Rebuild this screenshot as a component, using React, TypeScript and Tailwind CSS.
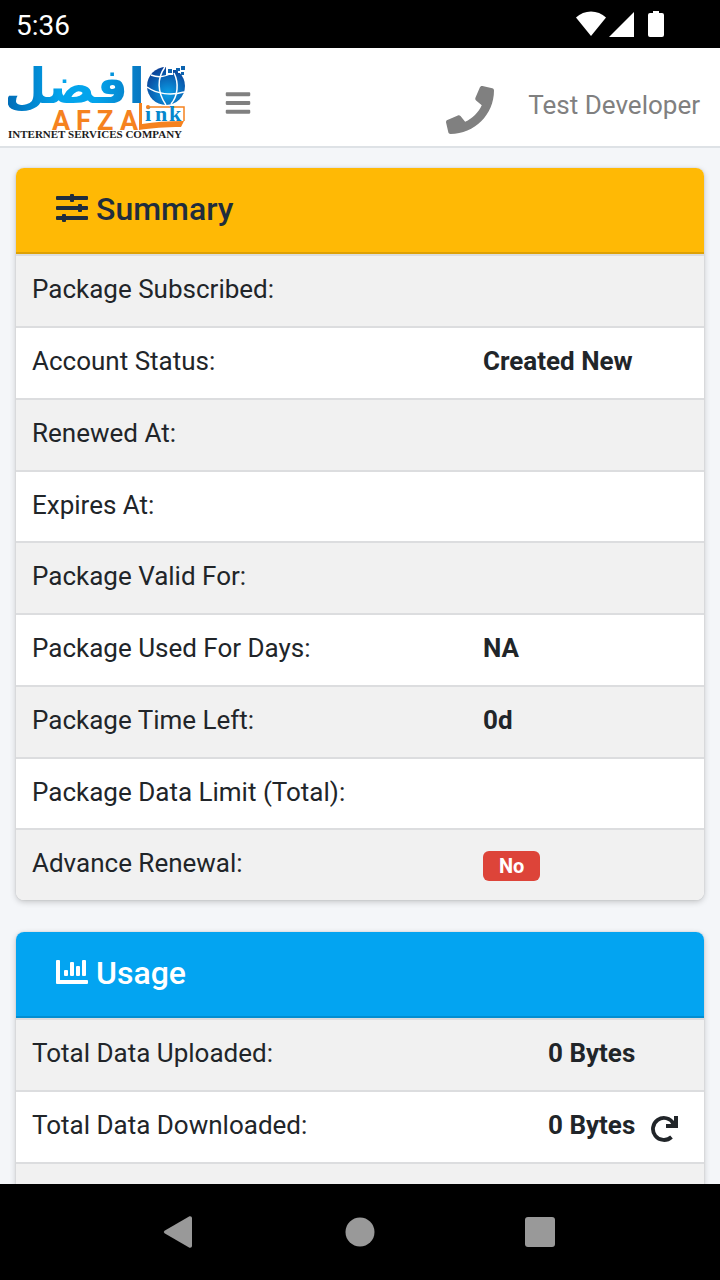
import React from 'react';
import { FaBars, FaPhone } from 'react-icons/fa';

type Row = { label: string; value?: React.ReactNode };

const summaryRows: Row[] = [
  { label: 'Package Subscribed:' },
  { label: 'Account Status:', value: 'Created New' },
  { label: 'Renewed At:' },
  { label: 'Expires At:' },
  { label: 'Package Valid For:' },
  { label: 'Package Used For Days:', value: 'NA' },
  { label: 'Package Time Left:', value: '0d' },
  { label: 'Package Data Limit (Total):' },
  { label: 'Advance Renewal:', value: <Badge>No</Badge> },
];

const usageRows: Row[] = [
  { label: 'Total Data Uploaded:', value: '0 Bytes' },
  {
    label: 'Total Data Downloaded:',
    value: (
      <span className="flex items-center gap-4">
        0 Bytes
        <button type="button" aria-label="Refresh" className="pt-2">
          <RefreshIcon />
        </button>
      </span>
    ),
  },
  { label: '' },
];

function Badge({ children }: { children: React.ReactNode }) {
  return (
    <span className="mt-1.5 block w-fit rounded-md bg-[#dd4439] px-4 text-xl leading-[30px] text-white">
      {children}
    </span>
  );
}

function RefreshIcon() {
  return (
    <svg width="28" height="28" viewBox="0 0 28 28" fill="none">
      <path d="M22.500 8.500A11 11 0 1 0 20.500 22" stroke="#212529" strokeWidth="3.800" />
      <path d="M23 1h4v12H15V9h4.500L23 6z" fill="#212529" />
    </svg>
  );
}

function SlidersIcon() {
  return (
    <svg width="32" height="28" viewBox="0 0 32 28" fill="currentColor">
      <rect y="2" width="32" height="4" rx="1" />
      <rect y="12" width="32" height="4" rx="1" />
      <rect y="22" width="32" height="4" rx="1" />
      <rect x="14" width="4" height="8" rx="1" />
      <rect x="22" y="10" width="4" height="8" rx="1" />
      <rect x="6" y="20" width="4" height="8" rx="1" />
    </svg>
  );
}

function ChartIcon() {
  return (
    <svg width="32" height="24" viewBox="0 0 32 24" fill="currentColor">
      <path d="M1 0h2a1 1 0 0 1 1 1v19h27a1 1 0 0 1 1 1v2a1 1 0 0 1-1 1H1a1 1 0 0 1-1-1V1a1 1 0 0 1 1-1z" />
      <rect x="8" y="10" width="4" height="6" rx="1" />
      <rect x="14" y="2" width="4" height="14" rx="1" />
      <rect x="20" y="6" width="4" height="10" rx="1" />
      <rect x="26" width="4" height="16" rx="1" />
    </svg>
  );
}

function Logo() {
  return (
    <svg width="180" height="84" viewBox="0 0 180 84" role="img" aria-label="Afzal Link">
      <defs>
        <linearGradient id="word" x1="0" y1="0" x2="1" y2="0">
          <stop offset="0" stopColor="#0069b4" />
          <stop offset="0.4" stopColor="#03a4ec" />
          <stop offset="0.65" stopColor="#03a4ec" />
          <stop offset="1" stopColor="#0873bd" />
        </linearGradient>
        <radialGradient id="globe" cx="0.55" cy="0.7" r="0.7">
          <stop offset="0" stopColor="#0aa0e8" />
          <stop offset="1" stopColor="#0a3f96" />
        </radialGradient>
      </defs>

      <text
        x="137"
        y="46"
        direction="rtl"
        fill="url(#word)"
        fontFamily="'DejaVu Sans', sans-serif"
        fontWeight="700"
        fontSize="49"
      >
        افضل
      </text>

      <circle cx="158" cy="29" r="19" fill="url(#globe)" />
      <g fill="none" stroke="#fff" strokeWidth="1.500">
        <path d="M139 30c10 7 24 9 37 5" />
        <path d="M143 18c8 3 14 2 20-2" />
        <path d="M157 10c-8 11-8 25 1 38" />
        <path d="M166 16c5 10 4 23-3 31" />
      </g>
      <g fill="#fff">
        <rect x="158" y="8" width="7" height="10" />
        <rect x="165" y="8" width="13" height="5" />
        <rect x="170" y="12" width="8" height="4" />
      </g>
      <g fill="#0b62ae">
        <rect x="160" y="12" width="4" height="4" />
        <rect x="168" y="11" width="4" height="3" />
        <rect x="173" y="9" width="4" height="4" />
        <rect x="173" y="15" width="3" height="3" />
      </g>

      <path d="M131 46h3v21c12-2 26-3 42-3l-3 6c-16 0-29 1-42 3z" fill="#f5821f" />
      <path d="M142 50h34v14" fill="none" stroke="#f5821f" strokeWidth="1.500" />

      <text
        x="44 68 89 112"
        y="73"
        fill="#f5821f"
        fontFamily="'Liberation Sans Narrow', Roboto, sans-serif"
        fontWeight="700"
        fontSize="27"
      >
        AFZA
      </text>
      <text
        x="137 147 161"
        y="64"
        fill="#0687cd"
        fontFamily="'Liberation Serif', serif"
        fontWeight="700"
        fontSize="22"
      >
        ink
      </text>
      <circle cx="140" cy="50" r="2" fill="#f5821f" />
      <text
        x="0"
        y="81"
        fill="#1c1c1c"
        fontFamily="'Liberation Serif', serif"
        fontWeight="700"
        fontSize="11"
      >
        INTERNET SERVICES COMPANY
      </text>
    </svg>
  );
}

function StatusBar() {
  return (
    <div className="flex h-12 shrink-0 items-center justify-between bg-black pr-14 pl-4 text-white">
      <span className="pt-1 text-[28px] leading-8">5:36</span>
      <svg width="88" height="28" viewBox="0 0 88 28" fill="#fff">
        <path d="M0 7.500C8-.5 22-.5 30 7.500L15 26z" />
        <path d="M58 2v25H33z" />
        <path d="M77 1h6v2h3a2 2 0 0 1 2 2v20a2 2 0 0 1-2 2H74a2 2 0 0 1-2-2V5a2 2 0 0 1 2-2h3z" />
      </svg>
    </div>
  );
}

function Navbar() {
  return (
    <header className="flex h-[100px] shrink-0 items-center border-b-2 border-[#dee2e6] bg-white pr-5 pl-2 text-[#808080]">
      <a href="#home" className="mt-1">
        <Logo />
      </a>
      <button type="button" aria-label="Menu" className="ml-9 mt-3">
        <FaBars size={28} />
      </button>
      <a href="#call" aria-label="Call" className="mt-[26px] ml-auto">
        <FaPhone size={48} />
      </a>
      <a href="#account" className="mt-4 ml-[34px] text-[26px] leading-9">
        Test Developer
      </a>
    </header>
  );
}

type CardProps = {
  title: string;
  icon: React.ReactNode;
  headClass: string;
  labelClass: string;
  rows: Row[];
};

function Card({ title, icon, headClass, labelClass, rows }: CardProps) {
  return (
    <section className="shrink-0 overflow-hidden rounded-lg bg-white shadow-[0_0_2px_rgba(0,0,0,0.13),0_2px_6px_rgba(0,0,0,0.2)]">
      <div className={`flex h-[86px] items-center gap-2 border-b-2 border-black/13 px-10 pb-1 ${headClass}`}>
        {icon}
        <h2 className="pt-0.5 text-[32px] leading-10 font-medium">{title}</h2>
      </div>
      <table className="w-full table-fixed border-separate border-spacing-0 text-left text-[26px] leading-9">
        <tbody>
          {rows.map(row => (
            <tr key={row.label} className="h-[72px] odd:bg-[#f1f1f1] nth-[4n]:h-[71px]">
              <th
                scope="row"
                className={`border-t-2 border-[#dcdddf] px-4 pb-1 font-normal whitespace-nowrap ${labelClass}`}
              >
                {row.label}
              </th>
              <td className="border-t-2 border-[#dcdddf] px-4 pb-1 font-bold whitespace-nowrap">{row.value}</td>
            </tr>
          ))}
        </tbody>
      </table>
    </section>
  );
}

function SystemNav() {
  return (
    <nav className="flex h-24 shrink-0 items-center justify-center gap-[148px] bg-black">
      <button type="button" aria-label="Back">
        <svg width="32" height="32" viewBox="2 0 32 32" fill="#999" className="overflow-visible">
          <path d="M2.500 14.700 27.500 0.300Q30 0 30 2v28q0 2-2.500 1.700L2.500 17.300Q1 16 2.500 14.700z" />
        </svg>
      </button>
      <button type="button" aria-label="Home">
        <svg width="32" height="32" viewBox="0 0 32 32" fill="#999">
          <circle cx="16" cy="16" r="14.500" />
        </svg>
      </button>
      <button type="button" aria-label="Recent apps">
        <svg width="32" height="32" viewBox="0 0 32 32" fill="#999">
          <rect x="1" y="1" width="30" height="30" rx="3" />
        </svg>
      </button>
    </nav>
  );
}

export default function App() {
  return (
    <div className="flex h-screen flex-col bg-[#f4f6f9] font-[Roboto,sans-serif] text-[#212529]">
      <StatusBar />
      <Navbar />
      <main className="flex min-h-0 flex-1 flex-col gap-8 overflow-hidden px-4 pt-5">
        <Card
          title="Summary"
          icon={<SlidersIcon />}
          headClass="bg-[#ffb905] text-[#1f2d3d]"
          labelClass="w-[451px]"
          rows={summaryRows}
        />
        <Card
          title="Usage"
          icon={<ChartIcon />}
          headClass="bg-[#03a4f1] text-white"
          labelClass="w-3/4"
          rows={usageRows}
        />
      </main>
      <SystemNav />
    </div>
  );
}
